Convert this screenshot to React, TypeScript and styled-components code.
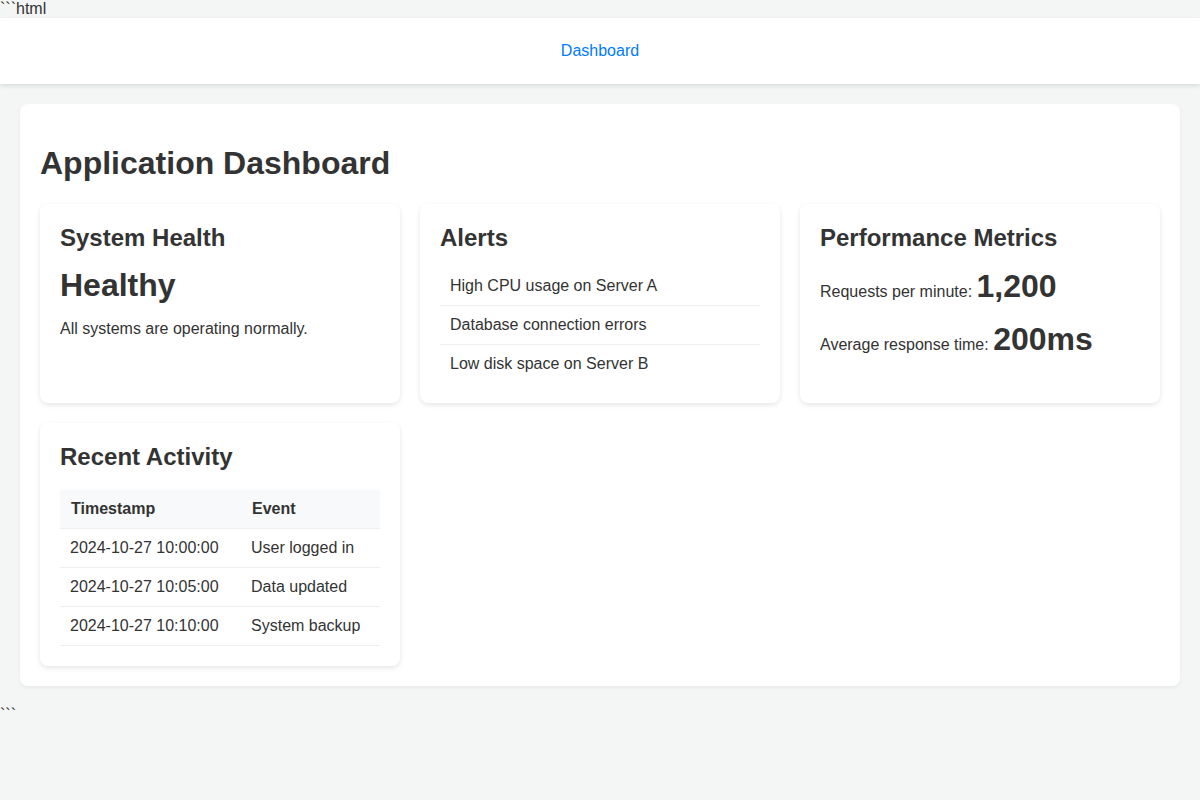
import React from 'react';
import styled, { createGlobalStyle } from 'styled-components';

const GlobalStyle = createGlobalStyle`
  html, body {
    margin: 0;
    padding: 0;
    background: #f4f5f5;
    color: #333;
    font-family: "Liberation Sans", Arial, sans-serif;
    font-size: 16px;
  }
`;

const Fence = styled.div``;

const Header = styled.header`
  background: #fff;
  padding: 24px 0;
  box-shadow: 0 2px 4px rgba(0, 0, 0, 0.1);
  display: flex;
  justify-content: center;
`;

const NavLink = styled.a`
  color: #007bff;
  text-decoration: none;
`;

const Main = styled.main`
  margin: 20px;
  padding: 20px;
  background: #fff;
  border-radius: 8px;
  box-shadow: 0 2px 4px rgba(0, 0, 0, 0.05);
`;

const Title = styled.h1`
  font-size: 2em;
  margin: 0.67em 0;
`;

const Grid = styled.div`
  display: grid;
  grid-template-columns: repeat(3, 1fr);
  gap: 20px;
`;

const Card = styled.section`
  background: #fff;
  border-radius: 8px;
  padding: 20px;
  box-shadow: 0 2px 5px rgba(0, 0, 0, 0.1);
`;

const CardTitle = styled.h2`
  font-size: 24px;
  margin: 0 0 15px;
`;

const Status = styled.div`
  font-size: 32px;
  font-weight: bold;
`;

const Text = styled.p`
  margin: 16px 0;
`;

const AlertList = styled.ul`
  list-style: none;
  margin: 0;
  padding: 0;
`;

const AlertItem = styled.li`
  padding: 10px;
  border-bottom: 1px solid #eee;

  &:last-child {
    border-bottom: none;
  }
`;

const Metric = styled.p`
  margin: 16px 0;
`;

const MetricValue = styled.span`
  font-size: 32px;
  font-weight: bold;
`;

const Table = styled.table`
  width: 100%;
  border-collapse: collapse;
  margin-top: 19px;
`;

const Th = styled.th`
  text-align: left;
  padding: 10px 10px 10px 11px;
  background: #f8f9fa;
  border-bottom: 1px solid #eee;
`;

const Td = styled.td`
  padding: 10px;
  border-bottom: 1px solid #eee;
`;

const alerts = ['High CPU usage on Server A', 'Database connection errors', 'Low disk space on Server B'];

const activity = [
  ['2024-10-27 10:00:00', 'User logged in'],
  ['2024-10-27 10:05:00', 'Data updated'],
  ['2024-10-27 10:10:00', 'System backup'],
];

export default function App() {
  return (
    <>
      <GlobalStyle />
      <Fence>```html</Fence>
      <Header>
        <NavLink href="#">Dashboard</NavLink>
      </Header>
      <Main>
        <Title>Application Dashboard</Title>
        <Grid>
          <Card>
            <CardTitle>System Health</CardTitle>
            <Status>Healthy</Status>
            <Text>All systems are operating normally.</Text>
          </Card>
          <Card>
            <CardTitle>Alerts</CardTitle>
            <AlertList>
              {alerts.map((a) => (
                <AlertItem key={a}>{a}</AlertItem>
              ))}
            </AlertList>
          </Card>
          <Card>
            <CardTitle>Performance Metrics</CardTitle>
            <Metric>
              Requests per minute: <MetricValue>1,200</MetricValue>
            </Metric>
            <Metric>
              Average response time: <MetricValue>200ms</MetricValue>
            </Metric>
          </Card>
          <Card>
            <CardTitle>Recent Activity</CardTitle>
            <Table>
              <thead>
                <tr>
                  <Th>Timestamp</Th>
                  <Th>Event</Th>
                </tr>
              </thead>
              <tbody>
                {activity.map(([t, e]) => (
                  <tr key={t}>
                    <Td>{t}</Td>
                    <Td>{e}</Td>
                  </tr>
                ))}
              </tbody>
            </Table>
          </Card>
        </Grid>
      </Main>
      <Fence>```</Fence>
    </>
  );
}
